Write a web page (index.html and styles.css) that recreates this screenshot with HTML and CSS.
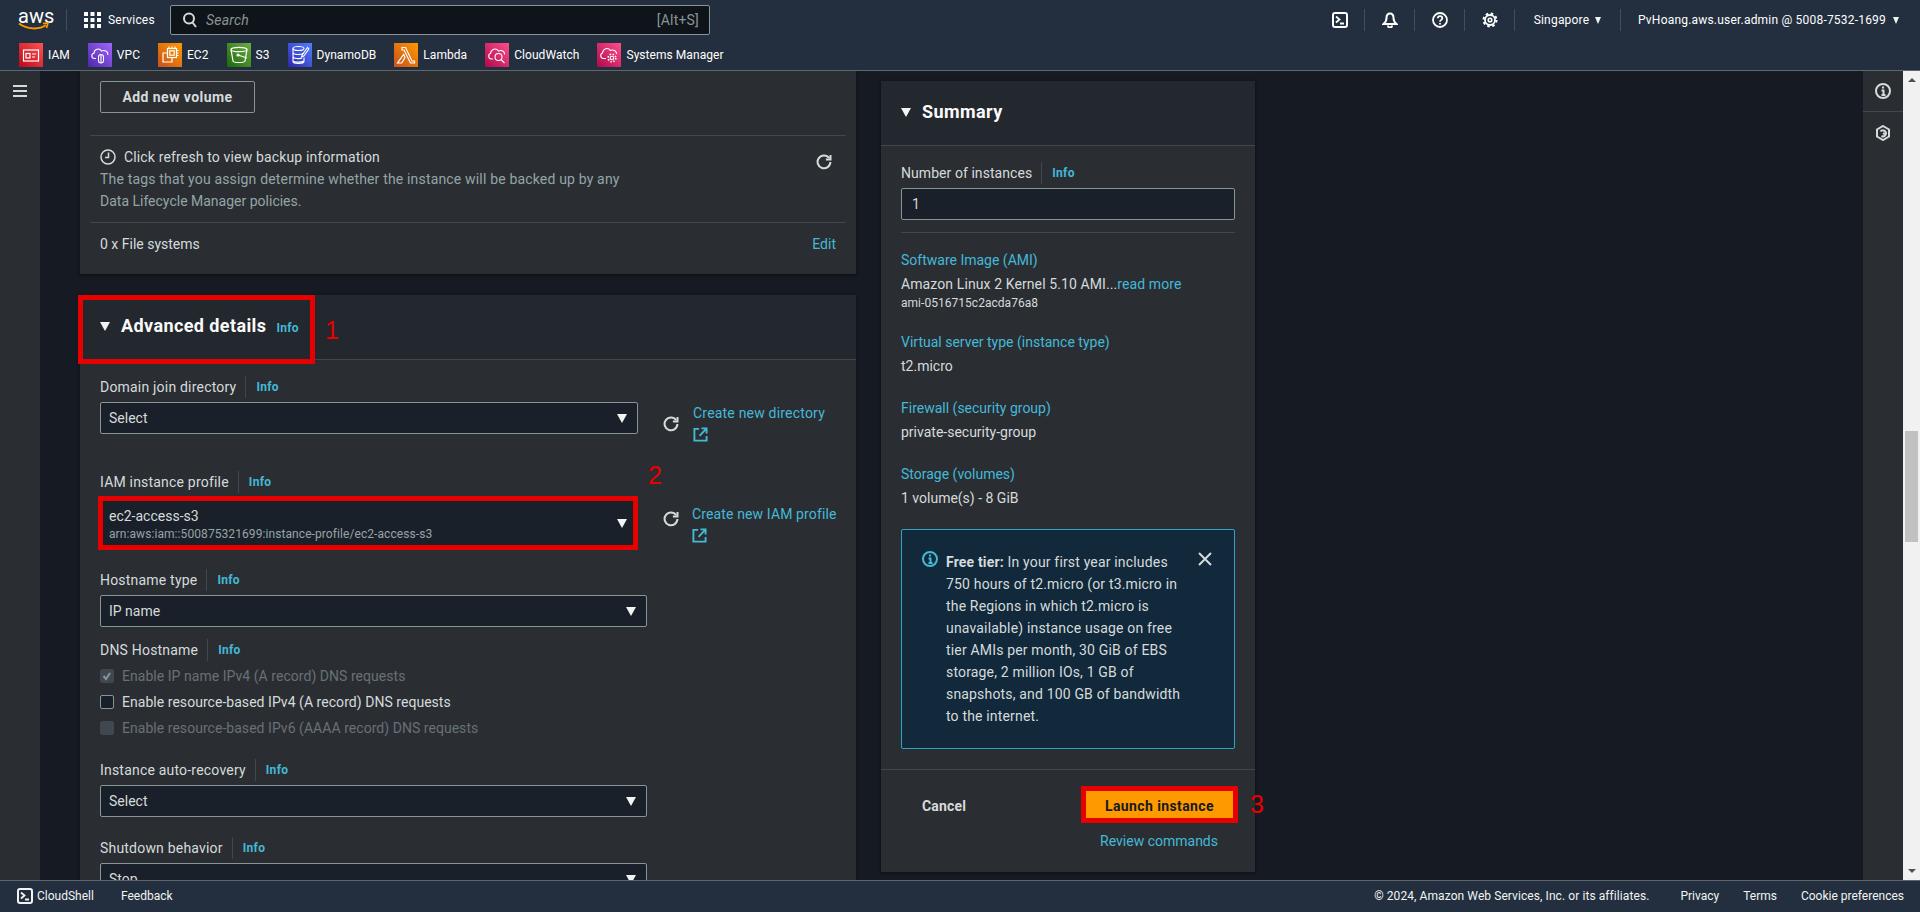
FILE: index.html
```html
<!DOCTYPE html>
<html>
<head>
    <meta charset="UTF-8">
    <meta name="viewport" content="width=device-width, initial-scale=1.0">
    <title>Launch an instance | EC2 Management Console</title>
    <link rel="stylesheet" href="styles.css">
</head>
<body>
    <svg class="defs" aria-hidden="true">
        <defs>
            <linearGradient id="gRed" x1="0" y1="1" x2="1" y2="0"><stop offset="0" stop-color="#bd0816"/><stop offset="1" stop-color="#ff5252"/></linearGradient>
            <linearGradient id="gPurple" x1="0" y1="1" x2="1" y2="0"><stop offset="0" stop-color="#4d27a8"/><stop offset="1" stop-color="#a166ff"/></linearGradient>
            <linearGradient id="gOrange" x1="0" y1="1" x2="1" y2="0"><stop offset="0" stop-color="#c8511b"/><stop offset="1" stop-color="#ff9900"/></linearGradient>
            <linearGradient id="gGreen" x1="0" y1="1" x2="1" y2="0"><stop offset="0" stop-color="#1b660f"/><stop offset="1" stop-color="#6cae3e"/></linearGradient>
            <linearGradient id="gBlue" x1="0" y1="1" x2="1" y2="0"><stop offset="0" stop-color="#2e27ad"/><stop offset="1" stop-color="#527fff"/></linearGradient>
            <linearGradient id="gPink" x1="0" y1="1" x2="1" y2="0"><stop offset="0" stop-color="#b0084d"/><stop offset="1" stop-color="#ff4f8b"/></linearGradient>
            <symbol id="icoRefresh" viewBox="0 0 16 16"><path d="M13.2 4.2A6.4 6.4 0 1 0 14.4 8" fill="none" stroke="currentColor" stroke-width="2"/><path d="M14.5 1v4.6H9.9" fill="none" stroke="currentColor" stroke-width="2"/></symbol>
            <symbol id="icoExternal" viewBox="0 0 16 16"><path d="M6.5 2H1.5v12.5h13V9.5" fill="none" stroke="currentColor" stroke-width="2"/><path d="M9 1.5h5.5V7M14 2L7 9.5" fill="none" stroke="currentColor" stroke-width="2"/></symbol>
            <symbol id="icoShell" viewBox="0 0 16 16"><rect x="1" y="1" width="14" height="14" rx="2" fill="none" stroke="currentColor" stroke-width="2"/><path d="M4 4.5L7.5 7.5L4 10.5M8 11.5h4" fill="none" stroke="currentColor" stroke-width="1.8"/></symbol>
        </defs>
    </svg>

    <header class="topbar">
        <div class="topbar-main">
            <div class="aws-logo">
                <span class="aws-word">aws</span>
                <svg class="aws-smile" width="32" height="9" viewBox="0 0 32 9"><path d="M1 1.5C9 7.5 21 8 28 3" fill="none" stroke="#f90" stroke-width="2"/><path d="M25 1.5l5-.5-1.5 5" fill="none" stroke="#f90" stroke-width="1.6"/></svg>
            </div>
            <div class="services">
                <svg width="17" height="16" viewBox="0 0 17 16" fill="#fff"><rect width="4" height="4"/><rect x="6.5" width="4" height="4"/><rect x="13" width="4" height="4"/><rect y="6" width="4" height="4"/><rect x="6.5" y="6" width="4" height="4"/><rect x="13" y="6" width="4" height="4"/><rect y="12" width="4" height="4"/><rect x="6.5" y="12" width="4" height="4"/><rect x="13" y="12" width="4" height="4"/></svg>
                <span>Services</span>
            </div>
            <div class="search">
                <svg width="14" height="16" viewBox="0 0 14 16" fill="none" stroke="#d5dbdb" stroke-width="2"><circle cx="6" cy="6.5" r="5"/><path d="M9.5 10.5l3.5 4.5"/></svg>
                <span class="search-text">Search</span>
                <span class="search-key">[Alt+S]</span>
            </div>
            <div class="top-actions">
                <div class="top-cell">
                    <svg class="ico-16"><use href="#icoShell"/></svg>
                </div>
                <div class="top-cell">
                    <svg class="ico-16" viewBox="0 0 16 16" fill="none" stroke="currentColor" stroke-width="2"><path d="M8 1.5C5.5 1.5 4.5 3.5 4.5 6c0 3-1 4.500-3 6h13c-2-1.500-3-3-3-6 0-2.500-1-4.500-3.500-4.500z"/><path d="M6 13.500a2 2 0 0 0 4 0"/></svg>
                </div>
                <div class="top-cell">
                    <svg class="ico-16" viewBox="0 0 16 16" fill="none" stroke="currentColor" stroke-width="1.800"><circle cx="8" cy="8" r="7"/><path d="M5.800 6.200C5.800 3.500 10.300 3.500 10.300 6.200 10.300 8 8 7.800 8 9.800"/><path d="M8 11v1.600"/></svg>
                </div>
                <div class="top-cell">
                    <svg class="ico-16" viewBox="0 0 16 16" fill="none" stroke="currentColor"><circle cx="8" cy="8" r="5" stroke-width="1.800"/><circle cx="8" cy="8" r="6.500" stroke-width="2" stroke-dasharray="2.550 2.550"/><circle cx="8" cy="8" r="1.800" stroke-width="1.600"/></svg>
                </div>
                <div class="top-cell top-region">Singapore <i class="tri tri-small"></i></div>
                <div class="top-user">PvHoang.aws.user.admin @ 5008-7532-1699 <i class="tri tri-small"></i></div>
            </div>
        </div>
        <nav class="shortcuts">
            <a class="shortcut">
                <svg class="svc" viewBox="0 0 24 24"><rect width="24" height="24" fill="url(#gRed)"/><g fill="none" stroke="#fff" stroke-width="1.200"><rect x="4.500" y="7" width="15" height="11"/><rect x="7" y="10.500" width="4" height="4.500"/><path d="M13 11h4M13 14h3"/></g></svg>
                IAM
            </a>
            <a class="shortcut">
                <svg class="svc" viewBox="0 0 24 24"><rect width="24" height="24" fill="url(#gPurple)"/><g fill="none" stroke="#fff" stroke-width="1.100"><path d="M8 15.500H6.500C3 15.500 3 10.500 6 10.200 6 6 11.500 4.500 13.500 8 17 6.500 20.500 9 19.800 12"/><rect x="10.500" y="11.500" width="5" height="8.500" rx="2.500"/><path d="M13 11.500v8.500"/></g></svg>
                VPC
            </a>
            <a class="shortcut">
                <svg class="svc" viewBox="0 0 24 24"><rect width="24" height="24" fill="url(#gOrange)"/><g fill="none" stroke="#fff" stroke-width="1.200"><rect x="9.500" y="5.500" width="9" height="9"/><rect x="11.800" y="7.800" width="4.400" height="4.400"/><path d="M9.500 10H5v9h9v-4.500M11 3.500v2M14 3.500v2M17 3.500v2M18.500 7.500h2M18.500 10h2M18.500 12.500h2"/></g></svg>
                EC2
            </a>
            <a class="shortcut">
                <svg class="svc" viewBox="0 0 24 24"><rect width="24" height="24" fill="url(#gGreen)"/><g fill="none" stroke="#fff" stroke-width="1.200"><ellipse cx="12" cy="6.500" rx="8" ry="2.200"/><path d="M4 6.500L6 18c.3 2 11.700 2 12 0l2-11.500"/><circle cx="11" cy="12" r="1"/><path d="M11 12l9 3"/></g></svg>
                S3
            </a>
            <a class="shortcut">
                <svg class="svc" viewBox="0 0 24 24"><rect width="24" height="24" fill="url(#gBlue)"/><g fill="none" stroke="#fff" stroke-width="1.100"><ellipse cx="10.500" cy="5.500" rx="5.500" ry="2"/><path d="M5 5.500v13c0 2.600 11 2.600 11 0v-4M5 9.500c0 2.400 8 2.500 10.300 1M5 13.500c0 2.400 7 2.500 9 1.500M5 17.500c0 2 9 2.200 11 .5"/><path d="M19.500 4.500l-5 7-1 2.500 2.300-1 5-7z"/></g></svg>
                DynamoDB
            </a>
            <a class="shortcut">
                <svg class="svc" viewBox="0 0 24 24"><rect width="24" height="24" fill="url(#gOrange)"/><path d="M8 4.500h3.500L18 18h2.500v2h-4L10 7H8zM9.700 11.500L11 14.500 7.700 20H3.500z" fill="none" stroke="#fff" stroke-width="1.200"/></svg>
                Lambda
            </a>
            <a class="shortcut">
                <svg class="svc" viewBox="0 0 24 24"><rect width="24" height="24" fill="url(#gPink)"/><g fill="none" stroke="#fff" stroke-width="1.100"><path d="M8 16H6.500C3 16 3 11 5.500 10.500 6 6 11 4.500 13.500 8 16.500 6.500 20 8.500 19.500 11.500"/><circle cx="13.500" cy="14" r="3.500"/><path d="M16 16.500l3.500 3.500"/></g></svg>
                CloudWatch
            </a>
            <a class="shortcut">
                <svg class="svc" viewBox="0 0 24 24"><rect width="24" height="24" fill="url(#gPink)"/><g fill="none" stroke="#fff" stroke-width="1.100"><path d="M9 15.500H6.500C3 15.500 3 10.500 5.500 10 6 5.500 11 4 13.500 7.500 16.500 6 20 8.500 19.500 11"/><circle cx="15" cy="15" r="1.700"/><circle cx="15" cy="15" r="3.800" stroke-width="1.600" stroke-dasharray="1.500 1.500"/></g></svg>
                Systems Manager
            </a>
        </nav>
    </header>

    <div class="main">
        <aside class="side-nav">
            <div class="burger"><span></span><span></span><span></span></div>
        </aside>

        <div class="content">
            <div class="left-col">
                <section class="card card-scrolled">
                    <button class="btn-outline">Add new volume</button>
                    <div class="split split-backup">
                        <div>
                            <div class="backup-title">
                                <svg class="ico-16" viewBox="0 0 16 16" fill="none" stroke="currentColor" stroke-width="1.500"><circle cx="8" cy="8" r="7"/><path d="M8.500 3.500V8.500H5"/></svg>
                                Click refresh to view backup information
                            </div>
                            <p class="muted"><span class="muted-wide">The tags that you assign determine whether the instance will be backed up by any</span><br>Data Lifecycle Manager policies.</p>
                        </div>
                        <svg class="ico-16 backup-refresh"><use href="#icoRefresh"/></svg>
                    </div>
                    <div class="split split-files">
                        <span>0 x File systems</span>
                        <a class="link">Edit</a>
                    </div>
                </section>

                <section class="card card-advanced">
                    <div class="card-head">
                        <i class="tri"></i>
                        <h2>Advanced details</h2>
                        <a class="info info-head">Info</a>
                        <div class="mark mark-head"></div>
                        <span class="step step-1">1</span>
                    </div>
                    <div class="card-body">
                        <div class="label-row"><span>Domain join directory</span><a class="info">Info</a></div>
                        <div class="select-row">
                            <div class="select select-short"><span>Select</span><i class="tri"></i></div>
                            <svg class="ico-16 row-refresh"><use href="#icoRefresh"/></svg>
                            <a class="link new-link">Create new directory<svg class="ico-16 ext"><use href="#icoExternal"/></svg></a>
                        </div>

                        <div class="label-row gap-29"><span>IAM instance profile</span><a class="info">Info</a></div>
                        <div class="select-row">
                            <div class="select select-short select-tall">
                                <span class="select-text">ec2-access-s3<small>arn:aws:iam::500875321699:instance-profile/ec2-access-s3</small></span>
                                <i class="tri"></i>
                                <div class="mark mark-select"></div>
                                <span class="step step-2">2</span>
                            </div>
                            <svg class="ico-16 row-refresh"><use href="#icoRefresh"/></svg>
                            <a class="link new-link new-link-tall">Create new IAM profile<svg class="ico-16 ext"><use href="#icoExternal"/></svg></a>
                        </div>

                        <div class="label-row gap-20"><span>Hostname type</span><a class="info">Info</a></div>
                        <div class="select"><span>IP name</span><i class="tri"></i></div>

                        <div class="label-row gap-12"><span>DNS Hostname</span><a class="info">Info</a></div>
                        <div class="checks">
                            <div class="check is-disabled">
                                <span class="box"><svg width="14" height="14" viewBox="0 0 14 14" fill="none" stroke="#879596" stroke-width="2"><path d="M3.500 7l2.500 3 4-6"/></svg></span>
                                Enable IP name IPv4 (A record) DNS requests
                            </div>
                            <div class="check"><span class="box"></span>Enable resource-based IPv4 (A record) DNS requests</div>
                            <div class="check is-disabled"><span class="box"></span>Enable resource-based IPv6 (AAAA record) DNS requests</div>
                        </div>

                        <div class="label-row gap-18"><span>Instance auto-recovery</span><a class="info">Info</a></div>
                        <div class="select"><span>Select</span><i class="tri"></i></div>

                        <div class="label-row gap-20"><span>Shutdown behavior</span><a class="info">Info</a></div>
                        <div class="select"><span>Stop</span><i class="tri"></i></div>
                    </div>
                </section>
            </div>

            <section class="summary">
                <div class="summary-head"><i class="tri"></i><h2>Summary</h2></div>
                <div class="summary-body">
                    <div class="label-row label-tight"><span>Number of instances</span><a class="info">Info</a></div>
                    <div class="input">1</div>
                    <hr class="rule">
                    <div class="sum-item">
                        <a class="link">Software Image (AMI)</a>
                        <div class="sum-wide">Amazon Linux 2 Kernel 5.10 AMI...<a class="link">read more</a></div>
                        <small>ami-0516715c2acda76a8</small>
                    </div>
                    <div class="sum-item">
                        <a class="link">Virtual server type (instance type)</a>
                        <div>t2.micro</div>
                    </div>
                    <div class="sum-item">
                        <a class="link">Firewall (security group)</a>
                        <div>private-security-group</div>
                    </div>
                    <div class="sum-item">
                        <a class="link">Storage (volumes)</a>
                        <div>1 volume(s) - 8 GiB</div>
                    </div>
                    <div class="alert">
                        <svg class="alert-icon" width="16" height="16" viewBox="0 0 16 16" fill="none" stroke="#44b9d6" stroke-width="2"><circle cx="8" cy="8" r="7"/><path d="M6.500 7.500H8.500V12M6.500 12h4M8 3.500v2"/></svg>
                        <p><b>Free tier:</b> In your first year includes<br>750 hours of t2.micro (or t3.micro in<br>the Regions in which t2.micro is<br>unavailable) instance usage on free<br>tier AMIs per month, 30 GiB of EBS<br>storage, 2 million IOs, 1 GB of<br>snapshots, and 100 GB of bandwidth<br>to the internet.</p>
                        <svg class="alert-close" width="14" height="14" viewBox="0 0 14 14" fill="none" stroke="#d5dbdb" stroke-width="2"><path d="M1 1l12 12M13 1L1 13"/></svg>
                    </div>
                </div>
                <div class="summary-foot">
                    <div class="foot-row">
                        <a class="cancel">Cancel</a>
                        <button class="btn-launch">Launch instance</button>
                        <span class="step step-3">3</span>
                    </div>
                    <a class="link review">Review commands</a>
                </div>
            </section>
        </div>

        <aside class="tools">
            <div class="tool-btn">
                <svg width="16" height="16" viewBox="0 0 16 16" fill="none" stroke="#d5dbdb" stroke-width="2"><circle cx="8" cy="8" r="7"/><path d="M6.500 7.500H8.500V12M6.500 12h4M8 3.500v2"/></svg>
            </div>
            <div class="tool-btn">
                <svg width="16" height="16" viewBox="0 0 16 16" fill="none" stroke="#d5dbdb" stroke-width="2"><path d="M8 1l6 3.500v7L8 15l-6-3.500v-7z"/><path d="M5.500 6.500a3 3 0 1 1 1 4.500M8 8l3 2" /></svg>
            </div>
        </aside>

        <div class="scrollbar">
            <i class="sb-up"></i>
            <div class="sb-thumb"></div>
            <i class="sb-down"></i>
        </div>
    </div>

    <footer class="footer">
        <div class="foot-left">
            <svg class="ico-16"><use href="#icoShell"/></svg>
            <span class="foot-shell">CloudShell</span>
            <span>Feedback</span>
        </div>
        <div class="foot-right">
            <span class="foot-copy">© 2024, Amazon Web Services, Inc. or its affiliates.</span>
            <span>Privacy</span>
            <span>Terms</span>
            <span>Cookie preferences</span>
        </div>
    </footer>
</body>
</html>
```

FILE: styles.css
```css
* {
    box-sizing: border-box;
}

html, body {
    margin: 0;
    height: 912px;
    overflow: hidden;
}

body {
    display: flex;
    flex-direction: column;
    background-color: #161a22;
    color: #d5dbdb;
    font-family: Roboto, "Noto Sans", sans-serif;
    font-size: 14px;
    line-height: 22px;
}

.defs {
    display: block;
    width: 0;
    height: 0;
}

.ico-16 {
    display: block;
    width: 16px;
    height: 16px;
    flex: none;
}

.tri {
    display: block;
    flex: none;
    width: 0;
    height: 0;
    border-left: 5.5px solid transparent;
    border-right: 5.5px solid transparent;
    border-top: 9px solid #f2f3f3;
}

.tri-small {
    border-left-width: 3.5px;
    border-right-width: 3.5px;
    border-top-width: 7px;
}

/* top bar */
.topbar {
    flex: none;
    height: 71px;
    background-color: #232f3e;
    border-bottom: 1px solid #5f6670;
    color: #fff;
    font-size: 12px;
    letter-spacing: .2px;
}

.topbar-main {
    display: flex;
    align-items: center;
    height: 40px;
    padding-left: 18px;
}

.aws-logo {
    display: flex;
    flex-direction: column;
    width: 48px;
    height: 22px;
}

.aws-word {
    font-size: 20px;
    line-height: 14px;
    letter-spacing: 0;
    color: #fff;
}

.aws-smile {
    display: block;
    margin-top: -1px;
}

.services {
    display: flex;
    align-items: center;
    gap: 7px;
    height: 22px;
    padding-left: 17px;
    border-left: 1px solid #414d5c;
    width: 104px;
}

.search {
    display: flex;
    align-items: center;
    width: 540px;
    height: 30px;
    padding: 0 10px 0 12px;
    background-color: #0f141a;
    border: 1px solid #879596;
    border-radius: 2px;
    font-size: 14px;
}

.search-text {
    margin-left: 9px;
    color: #879596;
    font-style: italic;
}

.search-key {
    margin-left: auto;
    color: #879596;
}

.top-actions {
    display: flex;
    align-items: center;
    margin-left: auto;
}

.top-cell {
    display: flex;
    align-items: center;
    justify-content: center;
    width: 50px;
    height: 22px;
    border-right: 1px solid #414d5c;
}

.top-region {
    width: 106px;
    gap: 6px;
    font-size: 12px;
}

.top-user {
    display: flex;
    align-items: center;
    gap: 7px;
    width: 299px;
    padding-left: 17px;
}

.shortcuts {
    display: flex;
    align-items: center;
    gap: 18px;
    height: 30px;
    padding-left: 19px;
    letter-spacing: .05px;
}

.shortcut {
    display: flex;
    align-items: center;
    gap: 5px;
}

.svc {
    display: block;
    width: 24px;
    height: 24px;
}

/* main area */
.main {
    flex: 1;
    display: flex;
    min-height: 0;
}

.side-nav {
    flex: none;
    width: 40px;
    background-color: #2a2e33;
}

.burger {
    display: flex;
    flex-direction: column;
    gap: 3px;
    padding: 14px 13px 0;
}

.burger span {
    height: 2px;
    background-color: #d5dbdb;
}

.content {
    flex: 1;
    display: flex;
    align-items: flex-start;
    gap: 25px;
    min-width: 0;
    padding-left: 40px;
    overflow: hidden;
}

.left-col {
    flex: none;
    width: 776px;
}

.card {
    background-color: #2a2e33;
    box-shadow: 0 1px 3px #0c0f13;
}

.card-scrolled {
    padding: 10px 10px 19px;
}

.btn-outline {
    display: block;
    width: 155px;
    height: 32px;
    margin-left: 10px;
    background: transparent;
    border: 1px solid #879596;
    border-radius: 2px;
    color: #d5dbdb;
    font: 700 14px Roboto, sans-serif;
    letter-spacing: .45px;
}

.split {
    display: flex;
    justify-content: space-between;
    border-top: 1px solid #414750;
    padding-left: 10px;
    padding-right: 10px;
}

.split-backup {
    margin-top: 22px;
    padding-top: 10px;
    padding-bottom: 10px;
}

.split-files {
    padding-top: 10px;
}

.backup-title {
    display: flex;
    align-items: center;
    gap: 8px;
    letter-spacing: .15px;
}

.muted {
    margin: 0;
    color: #95a5a6;
}

.muted-wide {
    letter-spacing: .17px;
}

.backup-refresh {
    margin: 8px 4px 0 0;
    color: #d5dbdb;
}

.link {
    color: #44b9d6;
}

.info {
    color: #44b9d6;
    font-size: 12px;
    font-weight: 700;
    letter-spacing: .3px;
}

.card-advanced {
    margin-top: 21px;
}

.card-head {
    position: relative;
    display: flex;
    align-items: center;
    height: 65px;
    padding: 0 20px 2px;
    background-color: #23272e;
    border-bottom: 1px solid #414750;
}

.card-head h2, .summary-head h2 {
    margin: 0;
    color: #fafafa;
    font-size: 18px;
    font-weight: 700;
    letter-spacing: .4px;
}

.card-head h2 {
    margin-left: 11px;
}

.info-head {
    margin-left: 10px;
    margin-top: 3px;
}

.mark {
    position: absolute;
    border: 5px solid #e60000;
}

.mark-head {
    left: -2px;
    top: 0;
    width: 237px;
    height: 69px;
}

.mark-select {
    left: -3px;
    top: -2px;
    right: -1px;
    bottom: -2px;
}

.step {
    position: absolute;
    color: #e60000;
    font-family: "Liberation Sans", sans-serif;
    font-size: 25px;
    line-height: 28px;
}

.step-1 {
    left: 245px;
    top: 21px;
}

.step-2 {
    left: 547px;
    top: -37px;
}

.step-3 {
    left: 349px;
    top: -1px;
}

.card-body {
    padding: 16px 20px 0;
}

.label-row {
    display: flex;
    align-items: center;
    height: 22px;
    margin-bottom: 4px;
    letter-spacing: .2px;
}

.label-tight {
    letter-spacing: .06px;
}

.label-row .info {
    margin-left: 9px;
    padding-left: 10px;
    border-left: 1px solid #414750;
}

.gap-12 { margin-top: 12px; }
.gap-18 { margin-top: 18px; }
.gap-20 { margin-top: 20px; }
.gap-29 { margin-top: 29px; }

.select-row {
    display: flex;
    align-items: flex-start;
}

.select {
    position: relative;
    display: flex;
    align-items: center;
    justify-content: space-between;
    width: 547px;
    height: 32px;
    padding: 0 10px 0 8px;
    background-color: #1a2029;
    border: 1px solid #879596;
    border-radius: 2px;
}

.select-short {
    flex: none;
    width: 538px;
}

.select-tall {
    height: 52px;
}

.select-text small {
    display: block;
    color: #95a5a6;
    font-size: 12px;
    line-height: 16px;
    margin-top: -1px;
    letter-spacing: .08px;
}

.row-refresh {
    margin: 14px 0 0 25px;
    color: #d5dbdb;
}

.new-link {
    display: block;
    margin-left: 14px;
    white-space: nowrap;
    letter-spacing: .2px;
}

.new-link-tall {
    margin-top: 6px;
    margin-left: 13px;
    letter-spacing: .13px;
}

.ext {
    margin-top: 3px;
    width: 15px;
    height: 15px;
}

.checks {
    display: flex;
    flex-direction: column;
    margin-top: -2px;
    letter-spacing: .04px;
}

.check {
    display: flex;
    align-items: center;
    gap: 8px;
    height: 26px;
}

.box {
    flex: none;
    width: 14px;
    height: 14px;
    background-color: #1a2029;
    border: 1px solid #879596;
    border-radius: 2px;
}

.box svg {
    display: block;
    margin: -1px;
}

.is-disabled {
    color: #687078;
}

.is-disabled .box {
    background-color: #414750;
    border-color: #414750;
}

/* summary */
.summary {
    flex: none;
    width: 374px;
    margin-top: 10px;
    background-color: #2a2e33;
    box-shadow: 0 1px 3px #0c0f13;
}

.summary-head {
    display: flex;
    align-items: center;
    gap: 11px;
    height: 65px;
    padding: 0 20px 2px;
    background-color: #23272e;
    border-bottom: 1px solid #414750;
}

.summary-body {
    padding: 16px 20px 20px;
}

.input {
    height: 32px;
    padding: 0 10px;
    background-color: #1a2029;
    border: 1px solid #879596;
    border-radius: 2px;
    line-height: 30px;
}

.rule {
    height: 1px;
    margin: 12px 0 16px;
    border: 0;
    background-color: #414750;
}

.sum-item {
    margin-bottom: 20px;
}

.sum-item .link {
    display: block;
}

.sum-item > div {
    margin-top: 2px;
}

.sum-item > div .link {
    display: inline;
}

.sum-wide {
    letter-spacing: .1px;
}

.sum-item small {
    display: block;
    font-size: 12px;
    line-height: 16px;
    letter-spacing: .03px;
}

.alert {
    display: flex;
    align-items: flex-start;
    height: 220px;
    padding: 21px 20px;
    background-color: #12293b;
    border: 1px solid #2ea3c4;
    border-radius: 2px;
}

.alert-icon {
    flex: none;
    margin-right: 8px;
}

.alert p {
    margin: 0;
    white-space: nowrap;
    letter-spacing: .17px;
}

.alert b {
    font-weight: 700;
}

.alert-close {
    flex: none;
    margin-left: auto;
    margin-right: 2px;
    margin-top: 1px;
}

.summary-foot {
    display: flex;
    flex-direction: column;
    height: 103px;
    padding: 21px 20px 0;
    border-top: 1px solid #414750;
}

.foot-row {
    position: relative;
    display: flex;
    align-items: center;
    justify-content: space-between;
}

.cancel {
    margin: 2px 0 0 21px;
    font-weight: 700;
    letter-spacing: .2px;
}

.btn-launch {
    width: 147px;
    height: 27px;
    margin-right: 2px;
    padding: 2px 0 0;
    background-color: #f90;
    border: 0;
    outline: 5px solid #e60000;
    color: #16191f;
    font: 700 14px Roboto, sans-serif;
    letter-spacing: .4px;
}

.review {
    align-self: flex-end;
    margin-top: 12px;
    margin-right: 17px;
}

/* right rail */
.tools {
    flex: none;
    width: 40px;
    background-color: #2a2e33;
}

.tool-btn {
    display: flex;
    align-items: center;
    justify-content: center;
    height: 41px;
    border-bottom: 1px solid #414750;
}

.tool-btn:last-child {
    border-bottom: 0;
}

.scrollbar {
    flex: none;
    display: flex;
    flex-direction: column;
    align-items: center;
    width: 17px;
    background-color: #f1f1f1;
}

.sb-up, .sb-down {
    display: block;
    width: 0;
    height: 0;
    border-left: 4px solid transparent;
    border-right: 4px solid transparent;
}

.sb-up {
    margin-top: 7px;
    border-bottom: 4px solid #505050;
}

.sb-down {
    margin-top: auto;
    margin-bottom: 7px;
    border-top: 4px solid #505050;
}

.sb-thumb {
    width: 13px;
    height: 111px;
    margin-top: 349px;
    background-color: #c1c1c1;
}

/* footer */
.footer {
    flex: none;
    display: flex;
    align-items: center;
    justify-content: space-between;
    height: 32px;
    padding: 0 16px 2px 17px;
    background-color: #232f3e;
    border-top: 1px solid #5f6670;
    color: #f2f3f3;
    font-size: 12px;
}

.foot-left {
    display: flex;
    align-items: center;
}

.foot-shell {
    margin: 0 27px 0 4px;
}

.foot-right {
    display: flex;
    gap: 24px;
}

.foot-copy {
    margin-right: 7px;
    letter-spacing: .08px;
}
```
